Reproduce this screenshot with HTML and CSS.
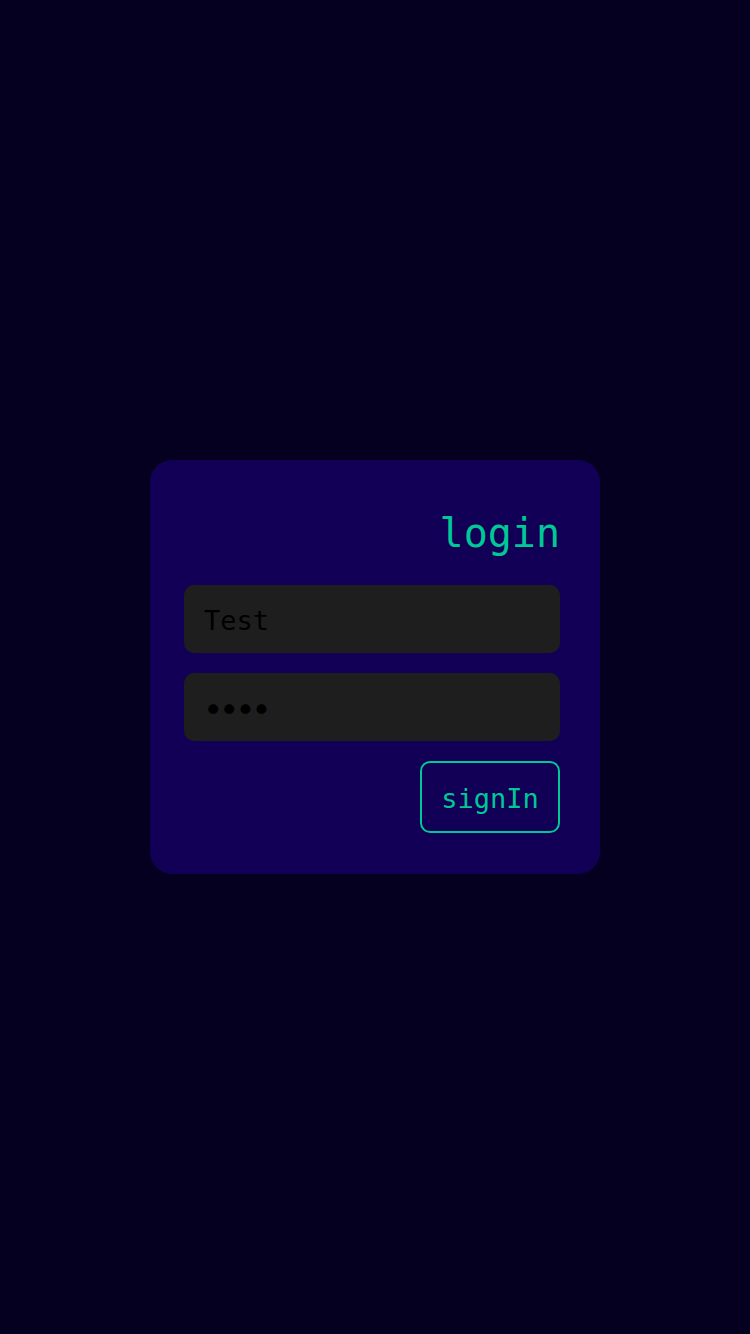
FILE: index.html
```html
<!DOCTYPE html>
<html lang="en">
<head>
<meta charset="utf-8">
<title>login</title>
<link rel="stylesheet" href="styles.css">
</head>
<body>
  <main class="page">
    <form class="card" onsubmit="return false">
      <h1 class="title">login</h1>
      <input class="field" type="text" value="Test">
      <input class="field field-password" type="password" value="1234">
      <div class="actions">
        <button class="btn" type="submit">signIn</button>
      </div>
    </form>
  </main>
</body>
</html>
```

FILE: styles.css
```css
* { box-sizing: border-box; }
html, body {
  margin: 0;
  padding: 0;
  background: #050020;
  font-family: "DejaVu Sans Mono", monospace;
}
.page {
  min-height: 100vh;
  display: flex;
  align-items: center;
  justify-content: center;
}
.card {
  width: 450px;
  background: #120057;
  border-radius: 22px;
  padding: 40px 40px 41px 34px;
  display: flex;
  flex-direction: column;
}
.title {
  margin: 10px 0 28px;
  font-size: 40px;
  line-height: 47px;
  font-weight: normal;
  color: #00c896;
  text-align: right;
}
.field {
  display: block;
  width: 100%;
  height: 68px;
  margin: 0 0 20px;
  padding: 2px 20px 0;
  border: none;
  border-radius: 10px;
  background: #1e1e1e;
  color: #000;
  font-family: "DejaVu Sans Mono", monospace;
  font-size: 27px;
  outline: none;
}
.field-password {
  font-size: 34px;
  letter-spacing: -4.4px;
  padding: 5px 20px 0 19px;
}
.actions {
  display: flex;
  justify-content: flex-end;
}
.btn {
  width: 140px;
  height: 72px;
  background: transparent;
  border: 2px solid #00c896;
  border-radius: 10px;
  color: #00c896;
  font-family: "DejaVu Sans Mono", monospace;
  font-size: 27px;
  padding: 3px 0 0;
}
```
